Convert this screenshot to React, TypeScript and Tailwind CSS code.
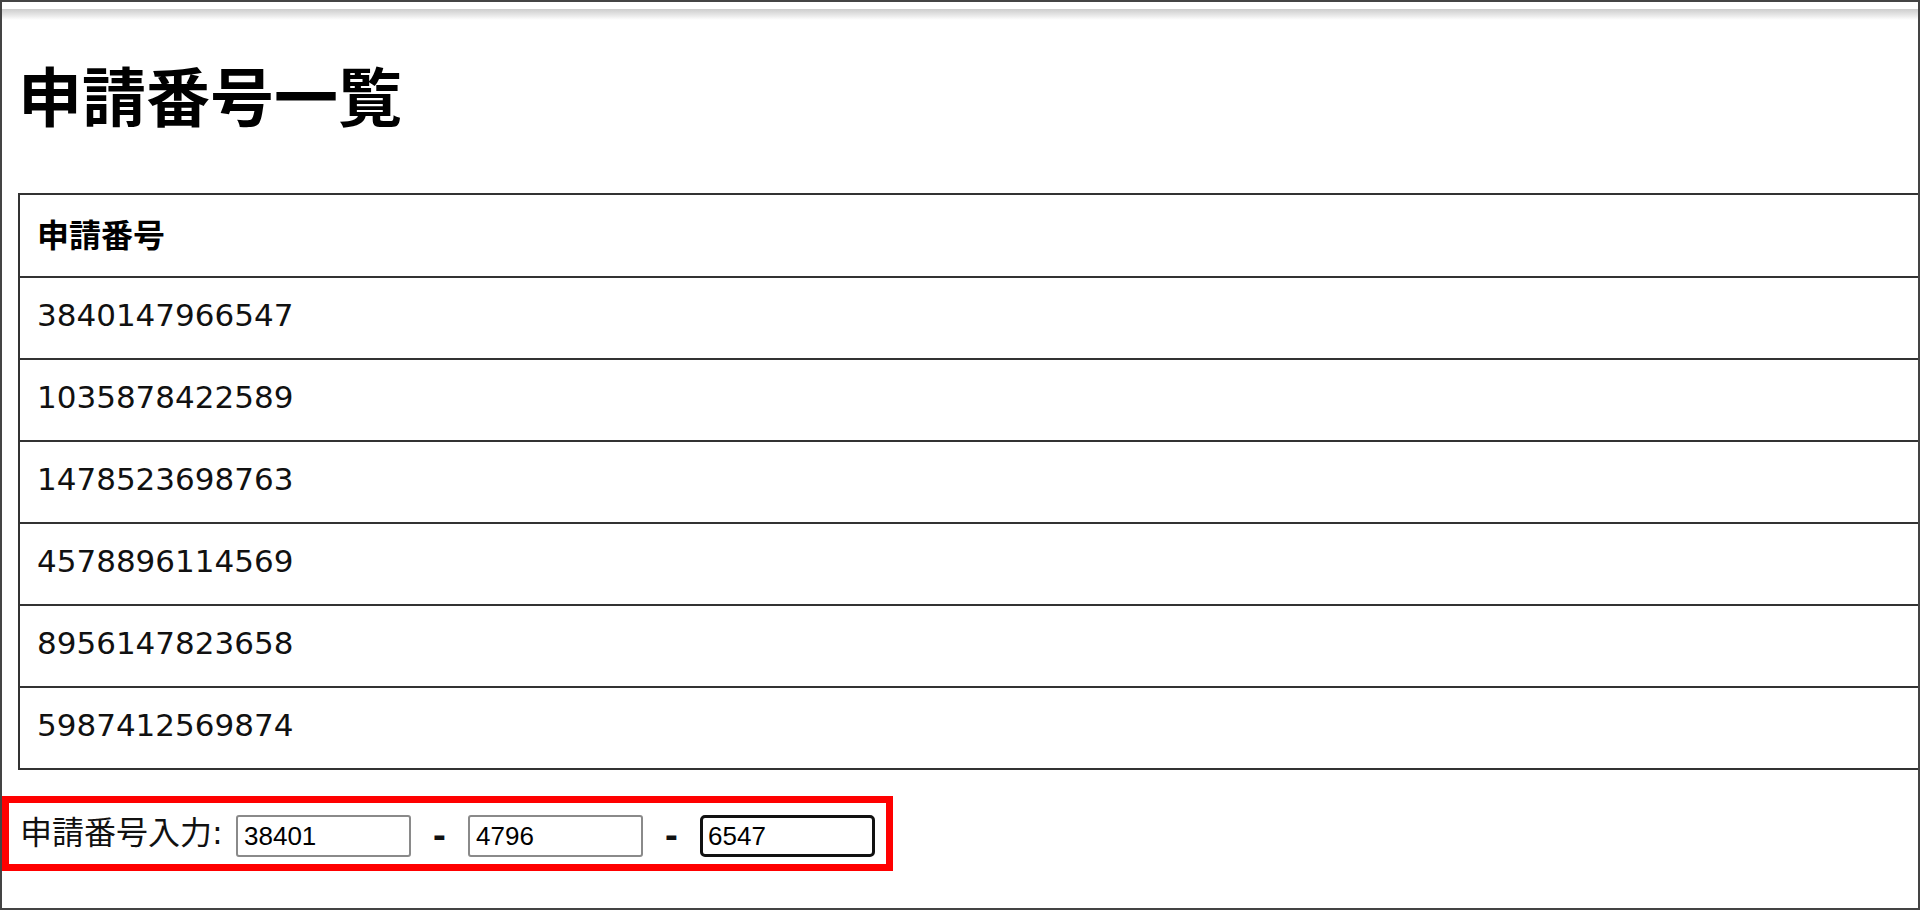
const rows = [
  "3840147966547",
  "1035878422589",
  "1478523698763",
  "4578896114569",
  "8956147823658",
  "5987412569874",
];

const bodyFont = "font-['DejaVu_Sans','Noto_Sans_CJK_JP',sans-serif]";

export default function App() {
  return (
    <div className="w-[1920px] h-[910px] overflow-hidden bg-white">
      <div className={`w-full h-full border-2 border-[#444] flex flex-col overflow-hidden text-[#111] ${bodyFont}`}>
        {/* top shadow band */}
        <div className="mt-[7px] h-[11px] w-full bg-gradient-to-b from-[#cdcdcd] via-[#e4e4e4] to-white" />

        <h1 className="mt-[41px] ml-[16px] h-[64px] text-[64px] leading-[64px] font-bold text-black font-['Noto_Sans_CJK_JP',sans-serif]">
          申請番号一覧
        </h1>

        <div className="mt-[68px] ml-[16px] flex flex-col border-2 border-r-0 border-[#333]">
          <div className="h-[83px] flex items-center pl-[17px] border-b-2 border-[#333] text-[32px] font-bold text-black">
            申請番号
          </div>
          {rows.map((n, i) => (
            <div
              key={n}
              className={`flex items-center pl-[17px] pb-[6px] text-[31px] ${
                i < rows.length - 1 ? "h-[82px] border-b-2 border-[#333]" : "h-[80px]"
              }`}
            >
              {n}
            </div>
          ))}
        </div>

        <div className="mt-[26px] w-[891px] h-[75px] border-[7px] border-[#ff0000] flex items-center pt-[5px] pl-[11px]">
          <span className="w-[216px] mb-[7px] text-[32px] leading-[48px] text-[#111]">申請番号入力:</span>
          <input
            readOnly
            value="38401"
            className="w-[175px] h-[42px] border-2 border-[#8a8a8a] rounded-[3px] pl-[6px] text-[26px] text-black font-['Liberation_Sans',Arial,sans-serif] outline-none"
          />
          <span className="w-[57px] text-center text-[32px] font-bold leading-[48px]">-</span>
          <input
            readOnly
            value="4796"
            className="w-[175px] h-[42px] border-2 border-[#8a8a8a] rounded-[3px] pl-[6px] text-[26px] text-black font-['Liberation_Sans',Arial,sans-serif] outline-none"
          />
          <span className="w-[57px] text-center text-[32px] font-bold leading-[48px]">-</span>
          <input
            readOnly
            value="6547"
            className="w-[175px] h-[42px] border-[3px] border-[#111] rounded-[5px] pl-[5px] text-[26px] text-black font-['Liberation_Sans',Arial,sans-serif] outline-none"
          />
        </div>
      </div>
    </div>
  );
}
